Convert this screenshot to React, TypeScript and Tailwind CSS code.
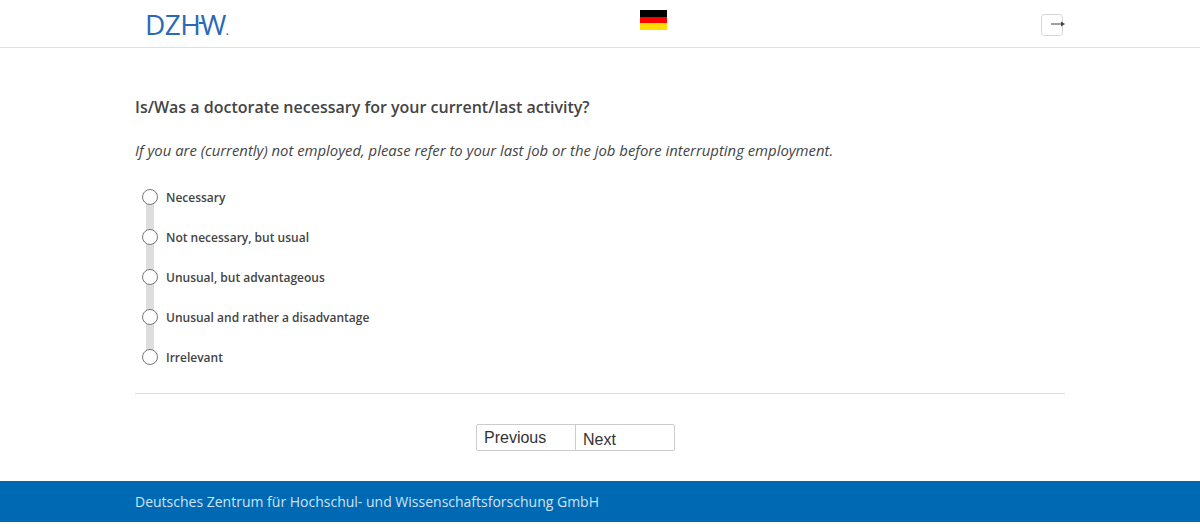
import React from 'react';

const options = [
  'Necessary',
  'Not necessary, but usual',
  'Unusual, but advantageous',
  'Unusual and rather a disadvantage',
  'Irrelevant',
];

const App: React.FC = () => {
  return (
    <div className="min-h-[531px] bg-white font-['Open_Sans',sans-serif] text-[#444444]">
      <header className="h-[48px] border-b border-[#dfdfdf]">
        <div className="mx-auto flex h-full w-[930px] items-start">
          <div className="relative ml-[10px] mt-[7px] w-[495px] text-[28px] font-normal leading-[34px] tracking-[-0.5px] text-[#2a6ab5]">
            DZHW<span className="text-[10px] font-bold">.</span>
            <div className="absolute left-[54px] top-[15px] h-[2px] w-[6px] bg-[#2a6ab5]" />
          </div>
          <svg className="mt-[10px] h-[20px] w-[27px]" viewBox="0 0 27 20">
            <rect width="27" height="7" fill="#000000" />
            <rect y="7" width="27" height="6" fill="#ff0000" />
            <rect y="13" width="27" height="7" fill="#ffdd00" />
          </svg>
          <svg className="ml-auto mt-[14px] h-[22px] w-[24px]" viewBox="0 0 24 22" fill="none">
            <rect x="0.5" y="0.5" width="21" height="21" rx="3" stroke="#d4d4d4" />
            <rect x="10" y="9.5" width="11" height="1" fill="#444444" />
            <path d="M20 7.5 L24 10 L20 12.5 Z" fill="#444444" />
          </svg>
        </div>
      </header>

      <main className="mx-auto w-[930px]">
        <h1 className="mt-[48px] text-[16px] font-semibold leading-[22px]">
          Is/Was a doctorate necessary for your current/last activity?
        </h1>
        <p className="mt-[22px] text-[14.87px] italic leading-[20px]">
          If you are (currently) not employed, please refer to your last job or the job before interrupting employment.
        </p>

        <div className="mt-[30px] flex flex-col">
          {options.map((label, i) => (
            <div key={label} className="flex h-[40px] items-start">
              <div className="relative ml-[8px] h-[40px] w-[15px]">
                {i < options.length - 1 && (
                  <div className="absolute left-[3px] top-[8px] h-[40px] w-[8px] bg-[#dddddd]" />
                )}
                <div className="absolute left-[-1px] top-[-1px] h-[16px] w-[16px] rounded-full border border-[#777777] bg-white" />
              </div>
              <span className="ml-[8px] text-[12px] font-semibold leading-[16px]">{label}</span>
            </div>
          ))}
        </div>

        <div className="mt-[3px] border-t border-[#dcdcdc]" />

        <div className="ml-[341px] mt-[30px] font-['Liberation_Sans',sans-serif] text-[16px] text-[#333333]">
          <div className="flex h-[27px] w-[199px] rounded-[2px] border border-[#cccccc]">
            <div className="w-[99px] border-r border-[#cccccc] pl-[7px] leading-[26px]">Previous</div>
            <div className="pl-[7px] leading-[29px]">Next</div>
          </div>
        </div>
      </main>

      <footer className="mt-[30px] h-[41px] bg-[#0069b4]">
        <div className="mx-auto w-[930px] text-[14px] leading-[41px] text-[#cfe3f3]">
          Deutsches Zentrum für Hochschul- und Wissenschaftsforschung GmbH
        </div>
      </footer>
    </div>
  );
};

export default App;
